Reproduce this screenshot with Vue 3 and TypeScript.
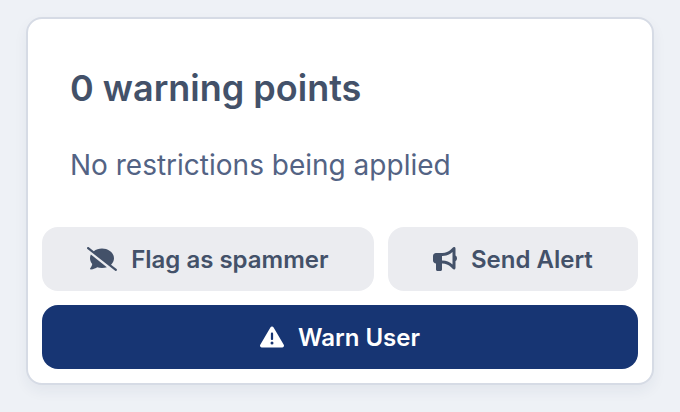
<script setup lang="ts">
const points: number = 0
</script>

<template>
  <main class="page">
    <section class="card">
      <div class="summary">
        <h2>{{ points }} warning points</h2>
        <p>No restrictions being applied</p>
      </div>
      <div class="actions">
        <button type="button" class="btn flag">
          <svg class="icon wide" viewBox="0 0 640 512" aria-hidden="true">
            <path d="M38.800 5.100C28.400-3.100 13.300-1.200 5.100 9.200S-1.200 34.700 9.200 42.900l592 464c10.400 8.200 25.500 6.300 33.700-4.100s6.300-25.500-4.100-33.700L512.900 376.700C552.200 340.200 576 292.300 576 240C576 125.100 461.400 32 320 32c-67.700 0-129.300 21.400-175.100 56.300L38.800 5.100zM64 240c0 45.100 17.700 86.800 47.700 120.900c-1.900 24.500-11.400 46.300-21.400 62.900c-5.500 9.200-11.100 16.600-15.200 21.600c-2.100 2.500-3.700 4.400-4.900 5.700c-.6 .6-1 1.100-1.300 1.400l-.3 .3c-4.600 4.600-5.900 11.400-3.400 17.400c2.500 6 8.300 9.900 14.800 9.900c28.700 0 57.600-8.900 81.600-19.300c22.900-10 42.400-21.900 54.300-30.600c31.800 11.500 67 17.900 104.100 17.900c37 0 72.300-6.400 104.100-17.900L82.900 161.300C70.700 185.600 64 212.200 64 240z" />
          </svg>
          <span>Flag as spammer</span>
        </button>
        <button type="button" class="btn alert">
          <svg class="icon" viewBox="0 0 512 512" aria-hidden="true">
            <path d="M480 32c0-12.900-7.800-24.600-19.800-29.600s-25.700-2.200-34.900 6.900L381.700 53c-48 48-113.100 75-181 75H64c-35.300 0-64 28.700-64 64v96c0 35.300 28.700 64 64 64v128c0 17.700 14.300 32 32 32h64c17.700 0 32-14.300 32-32V352h8.700c67.900 0 133 27 181 75l43.600 43.600c9.200 9.200 22.900 11.900 34.900 6.900s19.800-16.600 19.800-29.600V300.400c18.600-8.800 32-32.500 32-60.400s-13.400-51.600-32-60.400V32zm-64 76.700v262.600C357.200 317.800 280.500 288 200.700 288H192v-96h8.700c79.800 0 156.500-29.800 215.300-83.300z" />
          </svg>
          <span>Send Alert</span>
        </button>
        <button type="button" class="btn warn">
          <svg class="icon" viewBox="0 0 512 512" aria-hidden="true">
            <path fill-rule="evenodd" d="M256 32c14.200 0 27.300 7.500 34.500 19.800l216 368c7.300 12.400 7.300 27.700.2 40.100S486.300 480 472 480H40c-14.300 0-27.600-7.700-34.700-20.100s-7-27.800.2-40.100l216-368C228.700 39.500 241.800 32 256 32zm0 128c-13.300 0-24 10.700-24 24v112c0 13.300 10.700 24 24 24s24-10.700 24-24V184c0-13.300-10.700-24-24-24zm32 224a32 32 0 1 0-64 0 32 32 0 1 0 64 0z" />
          </svg>
          <span>Warn User</span>
        </button>
      </div>
    </section>
  </main>
</template>

<style>
body {
  margin: 0;
  background: #eef1f6;
}
</style>

<style scoped>
.page {
  padding: 17px 26px 27px;
  font-family: Inter, "Liberation Sans", sans-serif;
}
.card {
  background: #fff;
  border: 2px solid #d6dbe5;
  border-radius: 16px;
  box-shadow: 0 6px 14px rgba(40, 55, 80, 0.06);
}
.summary {
  padding: 42px 42px 41px;
}
h2 {
  margin: 0;
  font-size: 36px;
  line-height: 54px;
  font-weight: 600;
  color: #435169;
}
p {
  margin: 29px 0 0;
  font-size: 28px;
  line-height: 42px;
  color: #536384;
}
.actions {
  display: flex;
  flex-wrap: wrap;
  gap: 14px;
  padding: 0 14px 14px;
}
.btn {
  display: flex;
  align-items: center;
  justify-content: center;
  flex: 1 1 auto;
  gap: 14px;
  height: 64px;
  padding: 0 28px;
  border: 0;
  border-radius: 16px;
  background: #ebecf0;
  color: #435169;
  font: 600 24px/36px Inter, "Liberation Sans", sans-serif;
  cursor: pointer;
}
.btn span {
  padding-top: 2px;
}
.warn {
  flex-basis: 100%;
  background: #173573;
  color: #fff;
}
.icon {
  width: 24px;
  height: 24px;
  fill: currentColor;
}
.wide {
  width: 30px;
}
</style>
